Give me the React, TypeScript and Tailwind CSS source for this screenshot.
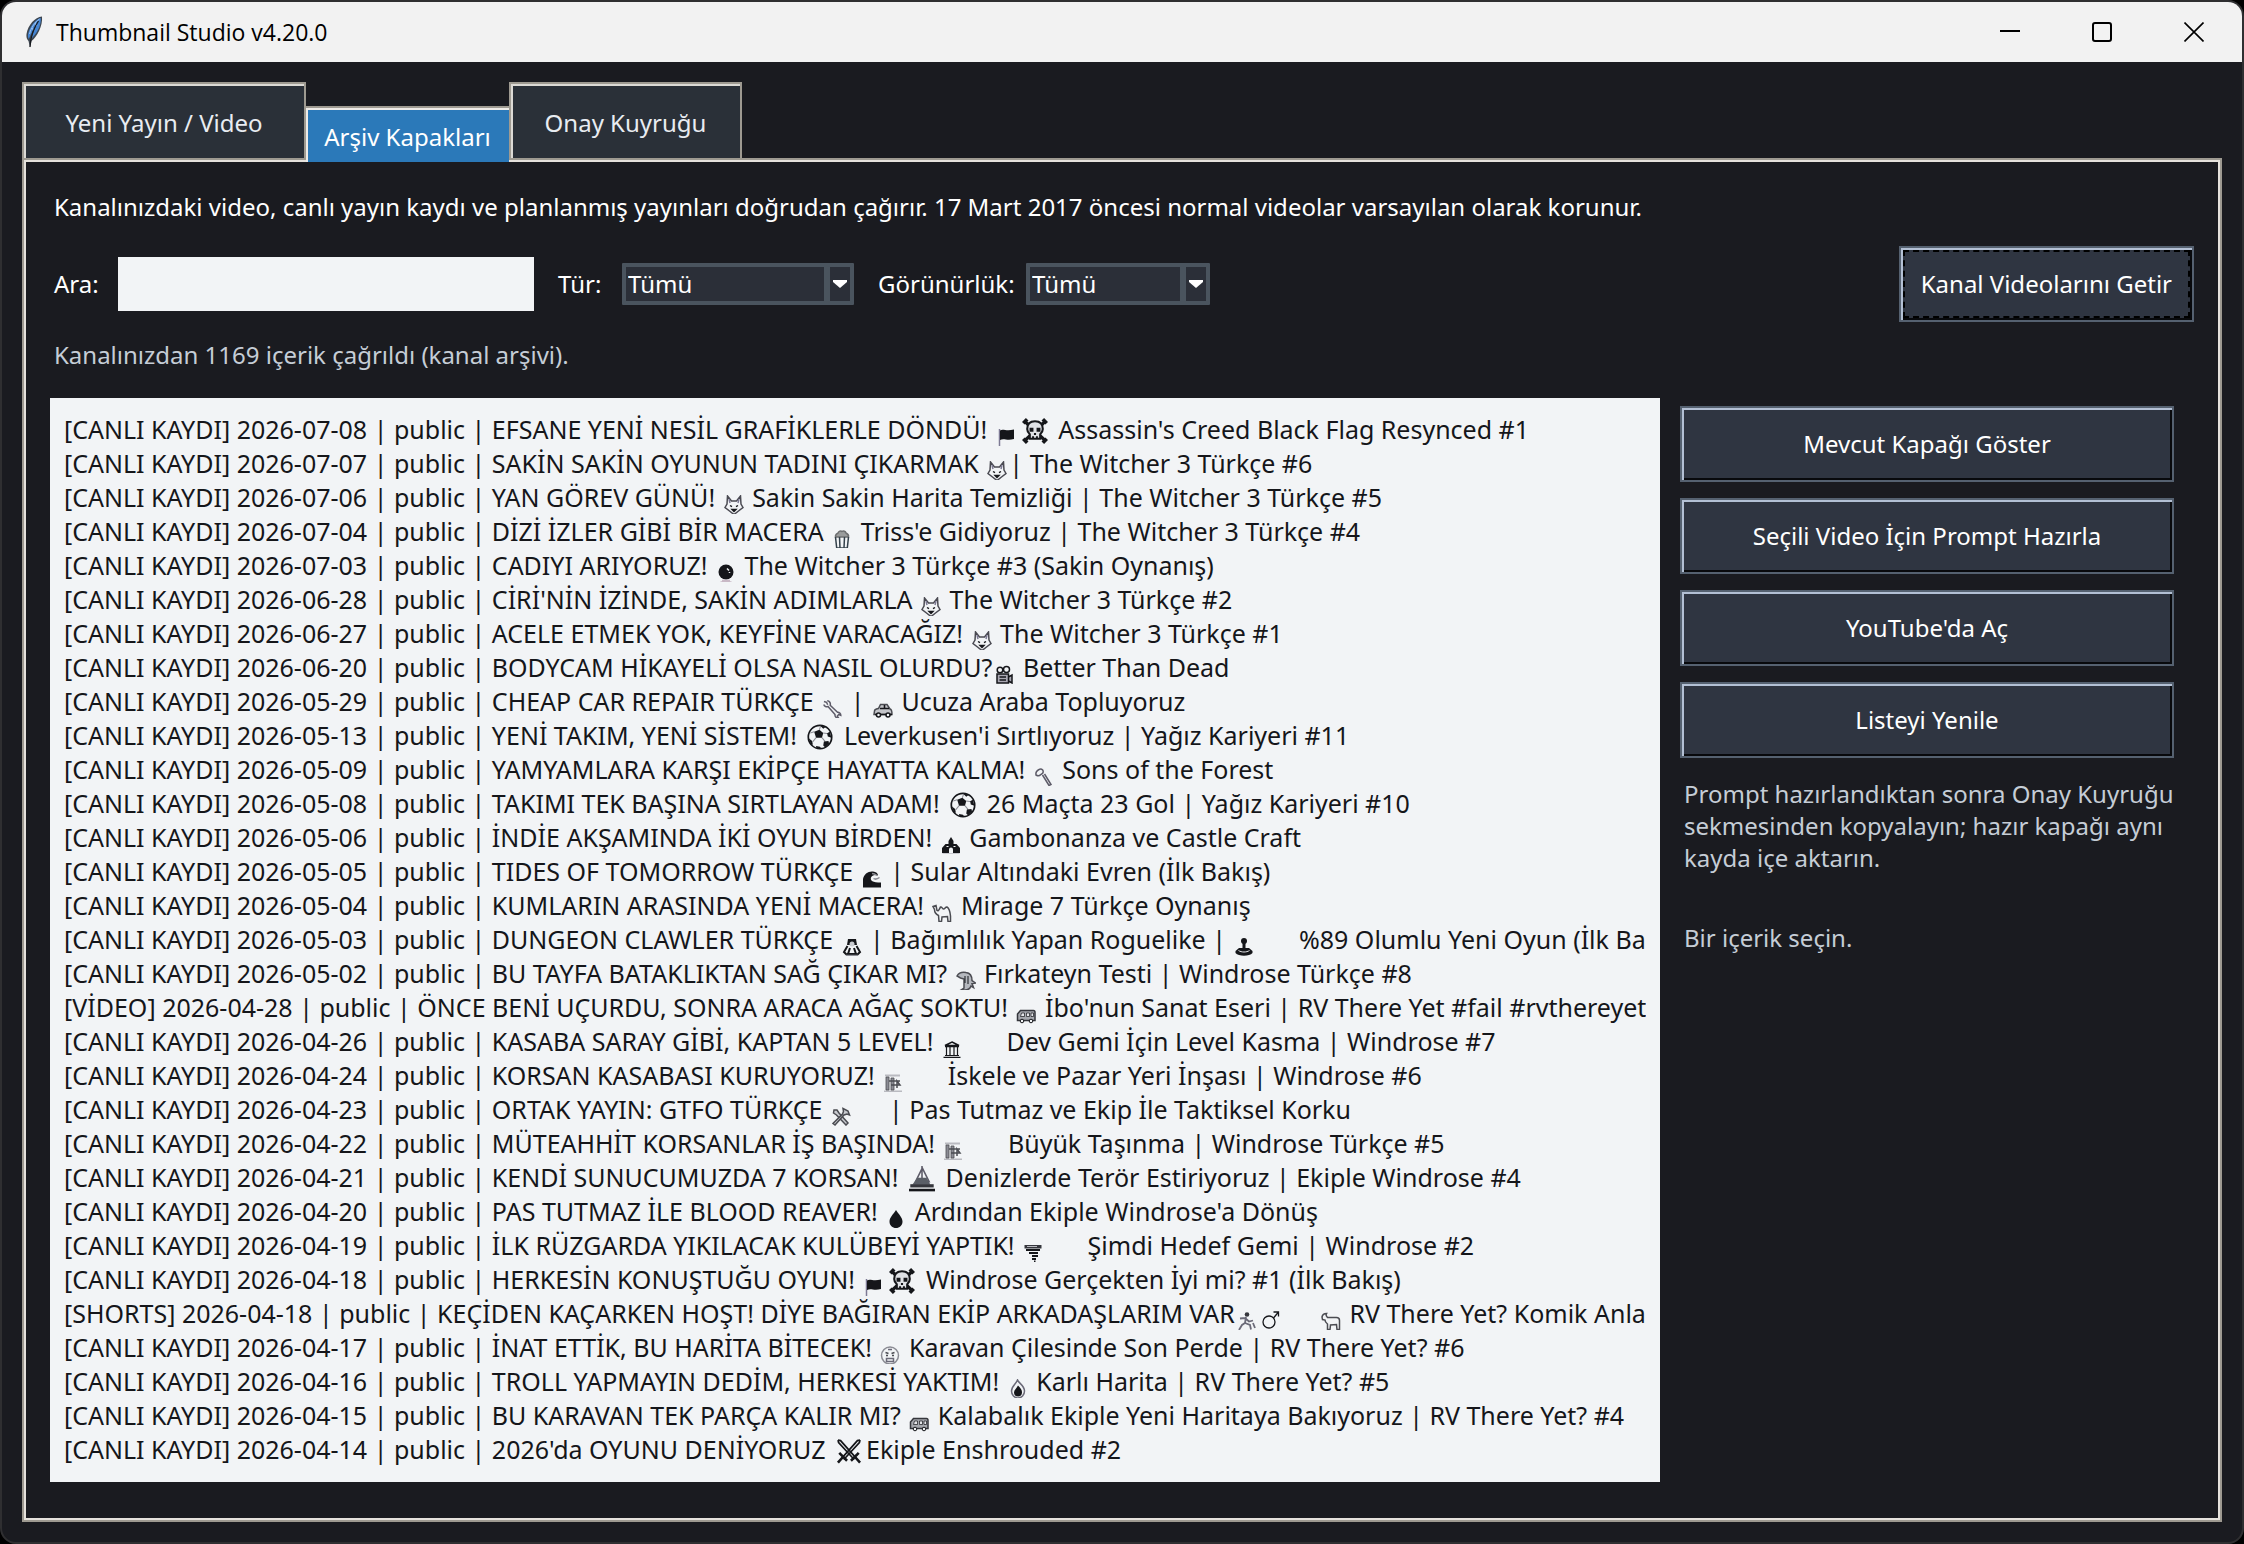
import { Fragment, ReactNode, useState } from 'react';
import { clsx } from 'clsx';

type IconName =
  | 'flag'
  | 'skull'
  | 'wolf'
  | 'popcorn'
  | 'crystal'
  | 'camera'
  | 'wrench'
  | 'car'
  | 'ball'
  | 'axe'
  | 'castle'
  | 'wave'
  | 'camel'
  | 'claw'
  | 'joystick'
  | 'dino'
  | 'van'
  | 'temple'
  | 'crane'
  | 'tools'
  | 'ship'
  | 'drop'
  | 'tornado'
  | 'runner'
  | 'male'
  | 'goat'
  | 'face'
  | 'fire'
  | 'swords';

type Part = string | { icon: IconName } | { blank: true };

interface Video {
  kind: string;
  date: string;
  title: Part[];
}

const icon = (name: IconName): Part => ({ icon: name });
const blank: Part = { blank: true };

const videos: Video[] = [
  { kind: 'CANLI KAYDI', date: '2026-07-08', title: ['EFSANE YENİ NESİL GRAFİKLERLE DÖNDÜ! ', icon('flag'), icon('skull'), " Assassin's Creed Black Flag Resynced #1"] },
  { kind: 'CANLI KAYDI', date: '2026-07-07', title: ['SAKİN SAKİN OYUNUN TADINI ÇIKARMAK ', icon('wolf'), '| The Witcher 3 Türkçe #6'] },
  { kind: 'CANLI KAYDI', date: '2026-07-06', title: ['YAN GÖREV GÜNÜ! ', icon('wolf'), ' Sakin Sakin Harita Temizliği | The Witcher 3 Türkçe #5'] },
  { kind: 'CANLI KAYDI', date: '2026-07-04', title: ['DİZİ İZLER GİBİ BİR MACERA ', icon('popcorn'), " Triss'e Gidiyoruz | The Witcher 3 Türkçe #4"] },
  { kind: 'CANLI KAYDI', date: '2026-07-03', title: ['CADIYI ARIYORUZ! ', icon('crystal'), ' The Witcher 3 Türkçe #3 (Sakin Oynanış)'] },
  { kind: 'CANLI KAYDI', date: '2026-06-28', title: ["CİRİ'NİN İZİNDE, SAKİN ADIMLARLA ", icon('wolf'), ' The Witcher 3 Türkçe #2'] },
  { kind: 'CANLI KAYDI', date: '2026-06-27', title: ['ACELE ETMEK YOK, KEYFİNE VARACAĞIZ! ', icon('wolf'), ' The Witcher 3 Türkçe #1'] },
  { kind: 'CANLI KAYDI', date: '2026-06-20', title: ['BODYCAM HİKAYELİ OLSA NASIL OLURDU?', icon('camera'), ' Better Than Dead'] },
  { kind: 'CANLI KAYDI', date: '2026-05-29', title: ['CHEAP CAR REPAIR TÜRKÇE ', icon('wrench'), ' | ', icon('car'), ' Ucuza Araba Topluyoruz'] },
  { kind: 'CANLI KAYDI', date: '2026-05-13', title: ['YENİ TAKIM, YENİ SİSTEM! ', icon('ball'), " Leverkusen'i Sırtlıyoruz | Yağız Kariyeri #11"] },
  { kind: 'CANLI KAYDI', date: '2026-05-09', title: ['YAMYAMLARA KARŞI EKİPÇE HAYATTA KALMA! ', icon('axe'), ' Sons of the Forest'] },
  { kind: 'CANLI KAYDI', date: '2026-05-08', title: ['TAKIMI TEK BAŞINA SIRTLAYAN ADAM! ', icon('ball'), ' 26 Maçta 23 Gol | Yağız Kariyeri #10'] },
  { kind: 'CANLI KAYDI', date: '2026-05-06', title: ['İNDİE AKŞAMINDA İKİ OYUN BİRDEN! ', icon('castle'), ' Gambonanza ve Castle Craft'] },
  { kind: 'CANLI KAYDI', date: '2026-05-05', title: ['TIDES OF TOMORROW TÜRKÇE ', icon('wave'), ' | Sular Altındaki Evren (İlk Bakış)'] },
  { kind: 'CANLI KAYDI', date: '2026-05-04', title: ['KUMLARIN ARASINDA YENİ MACERA! ', icon('camel'), ' Mirage 7 Türkçe Oynanış'] },
  { kind: 'CANLI KAYDI', date: '2026-05-03', title: ['DUNGEON CLAWLER TÜRKÇE ', icon('claw'), ' | Bağımlılık Yapan Roguelike | ', icon('joystick'), blank, ' %89 Olumlu Yeni Oyun (İlk Bakış)'] },
  { kind: 'CANLI KAYDI', date: '2026-05-02', title: ['BU TAYFA BATAKLIKTAN SAĞ ÇIKAR MI? ', icon('dino'), ' Fırkateyn Testi | Windrose Türkçe #8'] },
  { kind: 'VİDEO', date: '2026-04-28', title: ['ÖNCE BENİ UÇURDU, SONRA ARACA AĞAÇ SOKTU! ', icon('van'), " İbo'nun Sanat Eseri | RV There Yet #fail #rvthereyet"] },
  { kind: 'CANLI KAYDI', date: '2026-04-26', title: ['KASABA SARAY GİBİ, KAPTAN 5 LEVEL! ', icon('temple'), blank, ' Dev Gemi İçin Level Kasma | Windrose #7'] },
  { kind: 'CANLI KAYDI', date: '2026-04-24', title: ['KORSAN KASABASI KURUYORUZ! ', icon('crane'), blank, ' İskele ve Pazar Yeri İnşası | Windrose #6'] },
  { kind: 'CANLI KAYDI', date: '2026-04-23', title: ['ORTAK YAYIN: GTFO TÜRKÇE ', icon('tools'), blank, '| Pas Tutmaz ve Ekip İle Taktiksel Korku'] },
  { kind: 'CANLI KAYDI', date: '2026-04-22', title: ['MÜTEAHHİT KORSANLAR İŞ BAŞINDA! ', icon('crane'), blank, ' Büyük Taşınma | Windrose Türkçe #5'] },
  { kind: 'CANLI KAYDI', date: '2026-04-21', title: ['KENDİ SUNUCUMUZDA 7 KORSAN! ', icon('ship'), ' Denizlerde Terör Estiriyoruz | Ekiple Windrose #4'] },
  { kind: 'CANLI KAYDI', date: '2026-04-20', title: ['PAS TUTMAZ İLE BLOOD REAVER! ', icon('drop'), " Ardından Ekiple Windrose'a Dönüş"] },
  { kind: 'CANLI KAYDI', date: '2026-04-19', title: ['İLK RÜZGARDA YIKILACAK KULÜBEYİ YAPTIK! ', icon('tornado'), blank, ' Şimdi Hedef Gemi | Windrose #2'] },
  { kind: 'CANLI KAYDI', date: '2026-04-18', title: ['HERKESİN KONUŞTUĞU OYUN! ', icon('flag'), icon('skull'), ' Windrose Gerçekten İyi mi? #1 (İlk Bakış)'] },
  { kind: 'SHORTS', date: '2026-04-18', title: ['KEÇİDEN KAÇARKEN HOŞT! DİYE BAĞIRAN EKİP ARKADAŞLARIM VAR', icon('runner'), icon('male'), blank, icon('goat'), ' RV There Yet? Komik Anlar'] },
  { kind: 'CANLI KAYDI', date: '2026-04-17', title: ['İNAT ETTİK, BU HARİTA BİTECEK! ', icon('face'), ' Karavan Çilesinde Son Perde | RV There Yet? #6'] },
  { kind: 'CANLI KAYDI', date: '2026-04-16', title: ['TROLL YAPMAYIN DEDİM, HERKESİ YAKTIM! ', icon('fire'), ' Karlı Harita | RV There Yet? #5'] },
  { kind: 'CANLI KAYDI', date: '2026-04-15', title: ['BU KARAVAN TEK PARÇA KALIR MI? ', icon('van'), ' Kalabalık Ekiple Yeni Haritaya Bakıyoruz | RV There Yet? #4'] },
  { kind: 'CANLI KAYDI', date: '2026-04-14', title: ["2026'da OYUNU DENİYORUZ ", icon('swords'), 'Ekiple Enshrouded #2'] },
];

// Glyphs on a 20 unit grid
const glyphs: Record<IconName, ReactNode> = {
  flag: (
    <>
      <path d="M3.500 2v17" stroke="#7d7a94" />
      <path d="M4 3.500c3-2 6 1 14-1v9.500c-7 2-10-1-14 1z" fill="currentColor" stroke="none" />
    </>
  ),
  skull: (
    <>
      <path d="M2 2.500l16 15M18 2.500l-16 15" strokeWidth="2.400" />
      <path d="M1 4l3-3M16 1l3 3M1 16l3 3M16 19l3-3" strokeWidth="2.800" />
      <path d="M10 2.500c-4 0-6 2.500-6 6 0 2 .8 3 2 4v3.500h8V12.500c1.200-1 2-2 2-4 0-3.500-2-6-6-6z" fill="#dfe1e5" strokeWidth="1.600" />
      <path d="M5.800 7.500h3v3h-3zM11.200 7.500h3v3h-3zM9.200 11.500h1.600v1.500H9.200z" fill="currentColor" stroke="none" />
      <path d="M8.500 14v2M11.500 14v2" />
    </>
  ),
  wolf: (
    <>
      <path d="M3.500 1l4 5h5l4-5 .5 8 2 3.500-4.500 3.500-4.500 3.500-4.500-3.500L1 12.500 3 9z" stroke="#4a4a52" />
      <path d="M5 4l1 4M15 4l-1 4" stroke="#7d7a94" />
      <path d="M6 10.500l2 1.200M14 10.500l-2 1.200M8 14.500h4l-2 2z" strokeWidth="1.400" />
    </>
  ),
  popcorn: (
    <>
      <path d="M3.500 8C3 5 5.500 4.500 6 4c.5-2 3-2.500 4-1.500 1.500-1 3.500 0 4 1.500 1 .5 3 1.500 2.500 4z" fill="#9a9c9c" stroke="#6d6f70" />
      <path d="M3.500 8l1.200 11h10.600l1.200-11M7.500 8l.5 11M12.500 8l-.5 11" stroke="#33404a" />
    </>
  ),
  crystal: (
    <>
      <circle cx="10" cy="9" r="7.500" fill="currentColor" stroke="none" />
      <path d="M11 5.500l2 2M13.500 9v1" stroke="#f2f4f6" strokeWidth="1.500" />
      <path d="M4.500 19h11M6 17.500h8" stroke="#c9b9c6" />
    </>
  ),
  camera: (
    <>
      <circle cx="6" cy="5" r="2.800" />
      <circle cx="12.500" cy="4.500" r="3" />
      <path d="M3 9h11.500v9H3zM14.500 12l3.500-2v8l-3.500-2" fill="#a9a7b2" />
      <path d="M5.500 12h6.500M5.500 15h6.500" />
    </>
  ),
  wrench: (
    <path d="M2 2.500l2.500.8 1.200 2.500M1.800 5.500c.5 2 2.800 2.800 4.200 2l7 8c-.3 2.500 1.500 3.700 3.500 3.500l-1.200-2 1.500-1.500 2 .8c0-2-1.500-3.200-3.300-3L8.200 6.200C8.800 4 7.500 2 5.200 1.800" stroke="#5d5b68" />
  ),
  car: (
    <>
      <path d="M1.500 12c0-2 3-2.300 4-2.500l2-4h6.500L17 10c1.500.3 2 1.500 2 5.500H1z" fill="#c3c4c9" stroke="#4b4c52" />
      <path d="M7 9.500h9M11.500 6v3.500M2 15.500h17" strokeWidth="1.600" />
      <circle cx="5.500" cy="16" r="2" fill="#f2f4f6" />
      <circle cx="15" cy="16" r="2" fill="#f2f4f6" />
    </>
  ),
  ball: (
    <>
      <circle cx="10" cy="10" r="9" strokeWidth="1.300" />
      <path d="M5.500 6l4-1.500 3 2.500-1 3.500H7z" fill="currentColor" stroke="none" />
      <path d="M9.500 4.500l1-3M12.500 7l4 .5M11.500 10.500l2.500 3M7 10.500l-2.500 3M5.500 6L2.500 7" stroke="#8b8c94" strokeWidth=".8" />
      <path d="M10 1.200l4.500 1-2 1.500zM17.500 6l1.300 4.500-2.800-.8-.5-2.500zM1.300 11l2.700 2 .5 3-1.500-.5zM13 13.500l3.500-.5.5 2-3 3-1.500-1.500zM7 17l3 .5 1 1.500-4-.7z" fill="currentColor" stroke="none" />
    </>
  ),
  axe: (
    <>
      <path d="M5 2.500c-2 1-3.500 3-3 5.500 2 1.200 3.500 1 4.500-.3l1.200-.7c1.500-1 2-2.500 1-4-1-1-2.500-1.200-3.700-.5z" stroke="#5d5b68" />
      <path d="M8.500 8l6.500 10.500 2-1L10.500 7" stroke="#5d5b68" />
    </>
  ),
  castle: (
    <>
      <path d="M10 2l2.500 4v3h3l3.500 4v5h-7v-3.500a2 2 0 0 0-4 0V18H1v-5l3.500-4h3V6z" fill="currentColor" stroke="none" />
      <path d="M5.500 11.500h2M12.500 11.500h2" stroke="#f2f4f6" strokeWidth="1" />
      <path d="M1.500 19h17" stroke="#b9bac0" />
    </>
  ),
  wave: (
    <>
      <path d="M1 18.500V10C2 5 6 2 11 2.500c3 .3 5 2 5 4-3-1.200-6-.5-7 2-1 3 1.500 5 10 5v5z" fill="currentColor" stroke="none" />
      <path d="M10 4.500c2 0 3 .5 5 2M11.500 9.500c1.500 1 4 .5 6-1" stroke="#8b8c94" />
    </>
  ),
  camel: (
    <path d="M1 3.500l3-1 1 5c1.500 1 2-1 3.500-3.500 1.500-.5 2 2 3 2 1.500 0 2-2.500 3.500-2 2 1 3 4 3.500 9v5.500H16l-.5-5-5.500.5-.5 4.500H7l-.5-6C3.500 11 2.500 9 2.500 6.500z" stroke="#4b4c52" />
  ),
  claw: (
    <>
      <path d="M6 2h8l1 6H5z" fill="currentColor" stroke="none" />
      <circle cx="10" cy="7" r="2.500" fill="#c9cbd0" stroke="none" />
      <path d="M5.500 9L2 15l3 3M14.500 9l3.500 6-3 3M8 11l-2 6h8l-2-6" strokeWidth="2" />
      <path d="M4 18.500h12" stroke="#8b8c94" />
    </>
  ),
  joystick: (
    <>
      <circle cx="10" cy="4" r="3" fill="currentColor" stroke="none" />
      <path d="M10 5v7" strokeWidth="3" />
      <path d="M5 11h10l3.500 3v2c-3 3.500-14 3.500-17 0v-2z" fill="currentColor" stroke="none" />
      <path d="M4.500 13.500c3 2 8 2 11 0" stroke="#e4e5e9" strokeWidth="1" />
    </>
  ),
  dino: (
    <>
      <path d="M1 5c2-3.500 6-4 9-3.500 4 .5 6 4 6 8l3.500 2.500-3.500.5 1.500 4-2.500-1.500c-1 3-3 4-6 4H5l3-2V8L4.500 7z" fill="#b5b8be" stroke="#4b4c52" />
      <path d="M9 5v7M12 5v8" strokeWidth="1" />
    </>
  ),
  van: (
    <>
      <path d="M1.500 15.500V9l3-3.500h13c1 0 1.500 1 1.500 2v8z" fill="#a5a7ad" stroke="#35363c" />
      <path d="M5.500 8h3v3.500h-4zM10.500 8h3v3.500h-3zM15 8h2.500v3.500H15z" fill="#e4e5e9" strokeWidth=".7" />
      <circle cx="6" cy="16" r="1.800" fill="#f2f4f6" strokeWidth="1" />
      <circle cx="15" cy="16" r="1.800" fill="#f2f4f6" strokeWidth="1" />
    </>
  ),
  temple: (
    <>
      <path d="M10 3l7 3.500H3zM3 7.500h14M1.500 18.500h17" strokeWidth="1.400" />
      <path d="M4.500 8v9M8 8v9M12 8v9M15.500 8v9M3 16.500h14" strokeWidth="1.200" />
    </>
  ),
  crane: (
    <>
      <path d="M2 2.500h15M1 18.500h18" stroke="#b9bac0" strokeWidth="2" />
      <path d="M3 4h3v13H3zM8 5h3v12H8z" fill="#8b8c94" stroke="#4b4c52" strokeWidth=".8" />
      <path d="M6 8h11M8 12h9l-3-4v7" stroke="#4b4c52" strokeWidth="1.500" />
    </>
  ),
  tools: (
    <>
      <path d="M3 3l3 0 2 3 9 10-2 2L5.500 8 2.500 6z" fill="#c9cbd0" stroke="#4b4c52" />
      <path d="M12 1.500l5 2.500 1.500 4-2.500-1-3 1-9 10-2-1.500L11.500 7l1-2.500z" fill="#c9cbd0" stroke="#4b4c52" />
    </>
  ),
  ship: (
    <>
      <path d="M10 0v13M10 1l5.500 11H10M10 2L5 12h5" stroke="#5d5b68" strokeWidth="1.200" />
      <path d="M6.500 9h7l3 5.500h-14z" fill="#5a5e66" stroke="none" />
      <path d="M1 14h18v2.500H1z" fill="#35363c" stroke="none" />
      <path d="M0 17.500h20v2H0z" fill="currentColor" stroke="none" />
    </>
  ),
  drop: <path d="M10 1c2.500 4 6.500 7.500 6.500 11.500 0 4-3 6.500-6.500 6.500s-6.500-2.500-6.500-6.500C3.500 8.500 7.500 5 10 1z" fill="currentColor" stroke="none" />,
  tornado: (
    <>
      <path d="M1.500 2h17v3.500h-17z" fill="#35363c" stroke="none" />
      <path d="M3 7h14M6 10h9M9 13h6M9 16h4M11 18.500h1.500" strokeWidth="2" />
      <path d="M4 3.500h10" stroke="#b9bac0" strokeWidth="1" />
    </>
  ),
  runner: (
    <>
      <circle cx="10" cy="3.500" r="2.300" fill="#35363c" stroke="none" />
      <path d="M9 6l-1 6-3 2-3 5M8 12l5 2 1 4.500M3 7.500l5-.5 4 3.500 4-1M16 12l2 5" stroke="#6b6a78" strokeWidth="1.800" />
    </>
  ),
  male: (
    <>
      <circle cx="8" cy="11" r="6" strokeWidth="1.300" />
      <path d="M12.500 7L17.500 1M12.500 1h5v4.500" strokeWidth="1.300" />
    </>
  ),
  goat: (
    <path d="M1 6c.5-2.500 2-3.500 4.500-3.500C4.500 4 5 5 6.500 6.500h9c2 0 3 1 3 3v9H16l-.5-5-6 .5-.5 4.500H6.500V13C4.500 11.500 4 10.500 4 9L1.500 8.500z" stroke="#4b4c52" />
  ),
  face: (
    <>
      <circle cx="10" cy="10.500" r="8.500" stroke="#8b8c94" />
      <path d="M5.500 7.500l3 1M14.500 7.500l-3 1M6 10.500h2M12 10.500h2" stroke="#4b4c52" />
      <path d="M6.500 13.500h7v3h-7zM8 4.500h4" stroke="#6b6a78" />
    </>
  ),
  fire: (
    <>
      <path d="M9.500 1c.5 2.500 7 5.500 7 11 0 4-3 7-6.500 7s-6.500-3-6.500-7C3.500 7 8 5 9.500 1z" stroke="#6b6a78" />
      <path d="M10 6.500c3 3 4 4.500 4 7 0 2.500-1.700 4-4 4s-4-1.500-4-4c0-2.500 2.500-4 4-7z" fill="currentColor" stroke="none" />
    </>
  ),
  swords: (
    <>
      <path d="M1.500 1.500l2 .5 12 13.500M18.500 1.500l-2 .5-12 13.500M1.500 1.500l.5 2L14 16.500M18.500 1.500l-.5 2L6 16.500" strokeWidth="1.300" />
      <path d="M2.500 11.500l6 6M17.500 11.500l-6 6M5 15l-3.500 4M15 15l3.500 4" strokeWidth="2" />
    </>
  ),
};

const largeIcons: IconName[] = ['skull', 'ball', 'ship', 'swords'];

const Glyph = ({ name }: { name: IconName }) => (
  <svg
    viewBox="0 0 20 20"
    role="img"
    aria-label={name}
    fill="none"
    stroke="currentColor"
    strokeWidth="1.500"
    className={clsx(
      'inline-block',
      largeIcons.includes(name) ? 'mx-1 size-[26px] align-[-5px]' : 'mx-0.5 size-5 align-[-8px]'
    )}
  >
    {glyphs[name]}
  </svg>
);

const VideoRow = ({ video, selected, onSelect }: { video: Video; selected: boolean; onSelect: () => void }) => (
  <li
    role="option"
    aria-selected={selected}
    onClick={onSelect}
    className="h-[34px] overflow-hidden text-[25px] leading-[34px] whitespace-pre"
  >
    [{video.kind}] {video.date} | public |{' '}
    {video.title.map((part, index) => (
      <Fragment key={index}>
        {typeof part === 'string' ? (
          part
        ) : 'icon' in part ? (
          <Glyph name={part.icon} />
        ) : (
          <span className="inline-block w-9" />
        )}
      </Fragment>
    ))}
  </li>
);

const ActionButton = ({ children, focused }: { children: ReactNode; focused?: boolean }) => (
  <button
    className={clsx(
      'h-[76px] border-2 border-[#556170] bg-[#2f3541] px-5 text-2xl text-white',
      'shadow-[inset_2px_2px_0_#b3c0d4,inset_-2px_-2px_0_#08090c]',
      focused && 'outline-2 -outline-offset-6 outline-black outline-dashed'
    )}
  >
    {children}
  </button>
);

const Combo = ({ id, className }: { id: string; className: string }) => (
  <div className={clsx('relative h-[42px]', className)}>
    <select
      id={id}
      className="size-full appearance-none rounded-[1px] border-4 border-[#4a545e] bg-[#2b2f38] pr-8 pl-0.5 text-2xl leading-8 text-white outline-none"
    >
      <option>Tümü</option>
    </select>
    <span className="pointer-events-none absolute inset-y-1 right-1 flex w-[26px] items-center justify-center border-l-[6px] border-[#4a545e]">
      <svg viewBox="0 0 14 8" className="h-2 w-3.5" fill="#ffffff">
        <path d="M0 0h14v2L7 8 0 2z" />
      </svg>
    </span>
  </div>
);

const tabs = [
  { label: 'Yeni Yayın / Video', width: 'w-[284px]' },
  { label: 'Arşiv Kapakları', width: 'w-[203px]' },
  { label: 'Onay Kuyruğu', width: 'w-[233px]' },
];

const TitleBar = () => (
  <header className="flex h-[60px] items-center justify-between rounded-t-[14px] bg-[#f2f2f2] pr-[38px] pl-[22px]">
    <div className="flex items-center gap-3">
      <svg viewBox="0 0 20 32" className="h-8 w-5">
        <path d="M18 .5C11 1 4 9 2.500 18c-.4 3 .3 5 2 7L6 31.500 7.500 25C13 21 19 10 18 .5z" fill="#3d4650" />
        <path d="M16.800 2C11 3.500 5.500 11 4 18.500c-.2 1.500 0 3 .8 4.500C8 16 10.500 11 13 7c-1.500 5-4 11-6.500 16.500C12 19 17.500 10 16.800 2z" fill="#4585d2" />
        <path d="M15.500 3C11 6 7 12 5.500 18M11 7l2 3M8 12l2 3" stroke="#9cc3f2" strokeWidth="1" fill="none" />
        <path d="M14.500 5C10 12 7 18 6 31" stroke="#16191d" strokeWidth="1.200" fill="none" />
      </svg>
      <h1 className='font-["Open_Sans","Noto_Sans",sans-serif] text-[23px] text-black'>Thumbnail Studio v4.20.0</h1>
    </div>
    <div className="flex gap-[72px] text-black">
      <button aria-label="Simge durumuna küçült">
        <svg viewBox="0 0 20 20" className="size-5" fill="none" stroke="currentColor" strokeWidth="2">
          <path d="M0 9h20" />
        </svg>
      </button>
      <button aria-label="Ekranı kapla">
        <svg viewBox="0 0 20 20" className="size-5" fill="none" stroke="currentColor" strokeWidth="2">
          <rect x="1" y="1" width="18" height="18" rx="2" />
        </svg>
      </button>
      <button aria-label="Kapat">
        <svg viewBox="0 0 20 20" className="size-5" fill="none" stroke="currentColor" strokeWidth="1.600">
          <path d="M.5.5l19 19M19.500.5l-19 19" />
        </svg>
      </button>
    </div>
  </header>
);

export default function App() {
  const [activeTab, setActiveTab] = useState(1);
  const [selected, setSelected] = useState<number | null>(null);

  return (
    <div className='min-h-screen bg-black font-["Noto_Sans",sans-serif] text-2xl text-white'>
      <div className="flex min-h-screen flex-col rounded-2xl border-2 border-[#2f2f31] bg-[#1a1b20]">
        <TitleBar />

        <main className="flex flex-1 flex-col p-5">
          <div role="tablist" className="flex items-end">
            {tabs.map((tab, index) => (
              <button
                key={tab.label}
                role="tab"
                aria-selected={index === activeTab}
                onClick={() => setActiveTab(index)}
                className={clsx(
                  'border-[#9e9a91]',
                  tab.width,
                  index === activeTab
                    ? 'relative -mb-1 h-14 border-t-2 bg-[#2b79b9] pt-1 text-white shadow-[inset_2px_2px_0_#eeebe7]'
                    : 'h-[76px] border-2 border-b-0 bg-[#2a3038] pt-1 text-[#e8ecf1] shadow-[inset_2px_2px_0_#dcdad5]'
                )}
              >
                {tab.label}
              </button>
            ))}
          </div>

          <section className="flex flex-1 flex-col border-2 border-[#9e9a91] px-[26px] pt-[31px] pb-[38px] shadow-[inset_0_0_0_2px_#e6e2dc]">
            <p className="pl-1 leading-8">
              Kanalınızdaki video, canlı yayın kaydı ve planlanmış yayınları doğrudan çağırır. 17 Mart 2017 öncesi
              normal videolar varsayılan olarak korunur.
            </p>

            <div className="mt-[23px] flex items-center">
              <label htmlFor="search" className="w-[68px] pl-1">
                Ara:
              </label>
              <input id="search" type="text" className="h-[54px] w-[416px] bg-[#f2f4f6] px-2 text-[#15161a] outline-none" />
              <label htmlFor="kind" className="w-[88px] pl-6">
                Tür:
              </label>
              <Combo id="kind" className="w-[232px]" />
              <label htmlFor="visibility" className="w-[172px] pl-6">
                Görünürlük:
              </label>
              <Combo id="visibility" className="w-[184px]" />
              <div className="ml-auto flex">
                <ActionButton focused>Kanal Videolarını Getir</ActionButton>
              </div>
            </div>

            <p className="mt-[17px] pl-1 leading-8 text-[#c5cdd6]">
              Kanalınızdan 1169 içerik çağrıldı (kanal arşivi).
            </p>

            <div className="mt-[27px] flex flex-1 gap-5 pr-5">
              <ul role="listbox" className="min-w-0 flex-1 bg-[#f2f4f6] px-3.5 pt-3.5 pb-4 text-[#15161a]">
                {videos.map((video, index) => (
                  <VideoRow
                    key={index}
                    video={video}
                    selected={index === selected}
                    onSelect={() => setSelected(index)}
                  />
                ))}
              </ul>

              <aside className="flex w-[494px] flex-col pt-2">
                <div className="flex flex-col gap-4">
                  <ActionButton>Mevcut Kapağı Göster</ActionButton>
                  <ActionButton>Seçili Video İçin Prompt Hazırla</ActionButton>
                  <ActionButton>YouTube'da Aç</ActionButton>
                  <ActionButton>Listeyi Yenile</ActionButton>
                </div>
                <p className="mt-5 pl-1 leading-8 text-[#c5cdd6]">
                  Prompt hazırlandıktan sonra Onay Kuyruğu sekmesinden kopyalayın; hazır kapağı aynı kayda içe
                  aktarın.
                </p>
                <p className="mt-12 pl-1 leading-8 text-[#c5cdd6]">Bir içerik seçin.</p>
              </aside>
            </div>
          </section>
        </main>
      </div>
    </div>
  );
}
